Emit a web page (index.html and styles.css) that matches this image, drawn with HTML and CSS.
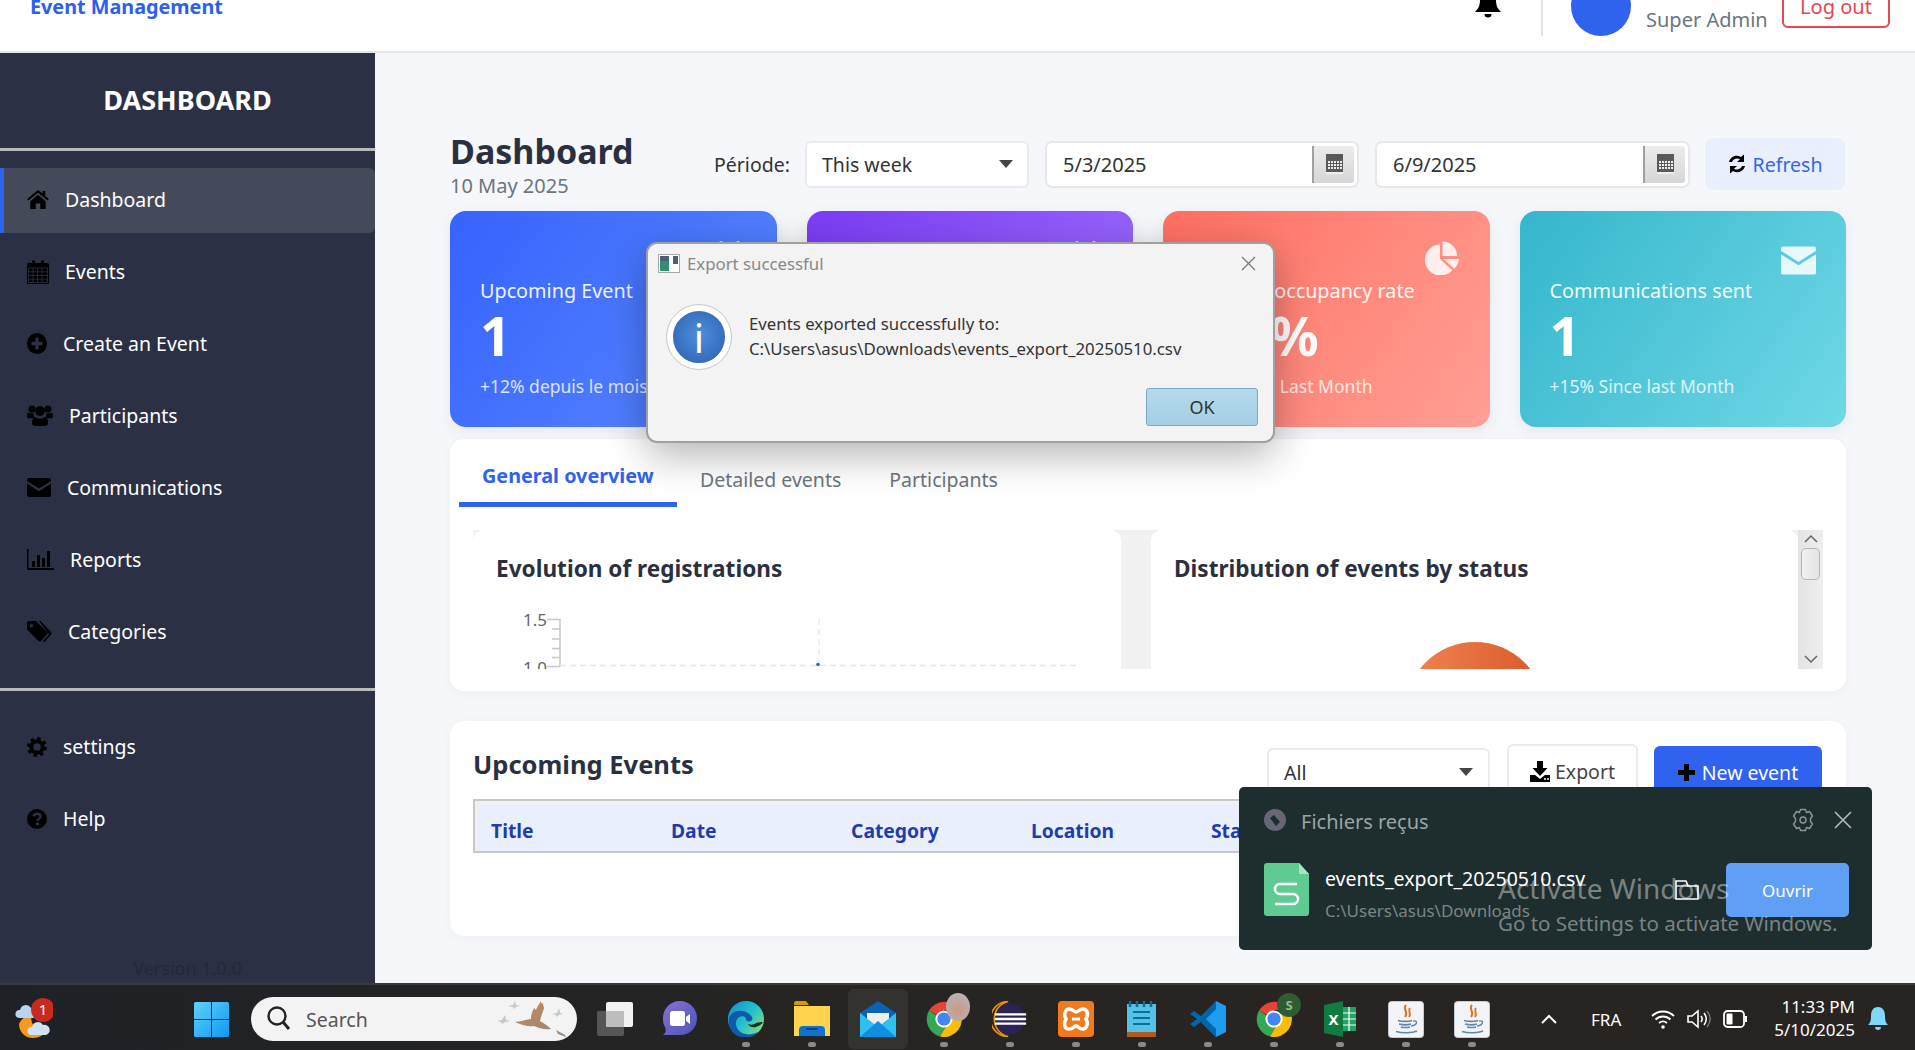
FILE: index.html
```html
<!DOCTYPE html>
<html lang="en">
<head>
<meta charset="utf-8">
<title>Event Management</title>
<link rel="stylesheet" href="styles.css">
</head>
<body>
<svg class="defs" width="0" height="0" aria-hidden="true">
  <defs>
    <symbol id="cal-btn" viewBox="0 0 17 20">
      <rect width="17" height="20" fill="#5a5a5a"/>
      <rect y="18" width="17" height="2" fill="#eee"/>
      <g fill="#eee">
        <rect x="2" y="7" width="2" height="2"/><rect x="5" y="7" width="2" height="2"/><rect x="8" y="7" width="2" height="2"/><rect x="11" y="7" width="2" height="2"/><rect x="14" y="7" width="2" height="2"/>
        <rect x="2" y="10" width="2" height="2"/><rect x="5" y="10" width="2" height="2"/><rect x="8" y="10" width="2" height="2"/><rect x="11" y="10" width="2" height="2"/><rect x="14" y="10" width="2" height="2"/>
        <rect x="2" y="13" width="2" height="2"/><rect x="5" y="13" width="2" height="2"/><rect x="8" y="13" width="2" height="2"/><rect x="11" y="13" width="2" height="2"/><rect x="14" y="13" width="2" height="2"/>
      </g>
    </symbol>
    <symbol id="chrome" viewBox="0 0 36 36">
      <path d="M18 18 L3 9.500 A18 18 0 0 1 33.500 9 L18 9z" fill="#ea4335"/>
      <path d="M3 9.500 A18 18 0 0 0 14 35.600 L22 22z" fill="#34a853"/>
      <path d="M33.500 9 A18 18 0 0 1 14 35.600 L22 22 L26 9z" fill="#fbbc05"/>
      <circle cx="18" cy="18" r="8.600" fill="#fff"/>
      <circle cx="18" cy="18" r="6.600" fill="#4285f4"/>
    </symbol>
    <symbol id="java" viewBox="0 0 36 37">
      <rect x=".5" y=".5" width="35" height="36" rx="3" fill="#f2f4f7" stroke="#c5ccd6"/>
      <path d="M18 4c-4 4 3 6-1 12M22 7c-3 3 2 5-1 9" fill="none" stroke="#e2701f" stroke-width="2"/>
      <path d="M10 19.500c4 1.200 11 1.200 14 0M11 23c4 1 9 1 12 0M13 26c3 .7 6 .7 9 0M8 30.500c6 1.700 16 1.700 21-.5" fill="none" stroke="#5f87a8" stroke-width="1.600"/>
      <path d="M25 20c5-1 5 4-2 5" fill="none" stroke="#5f87a8" stroke-width="1.400"/>
    </symbol>
  </defs>
</svg>

<header class="topbar">
  <div class="topbar-inner">
    <div class="brand">Event Management</div>
    <svg class="top-bell" viewBox="0 0 26 32"><path d="M13 0a2.500 2.500 0 0 1 2.500 3C20 4 21 8 21 13c0 6 2 9 5 12H0c3-3 5-6 5-12 0-5 1-9 5.500-10A2.500 2.500 0 0 1 13 0zM9.500 27h7a3.500 3.500 0 0 1-7 0z" fill="#000"/></svg>
    <div class="top-sep"></div>
    <div class="avatar"></div>
    <div class="user-role">Super Admin</div>
    <button class="logout">Log out</button>
  </div>
</header>

<div class="layout">
  <aside class="sidebar">
    <div class="side-title">DASHBOARD</div>
    <nav class="nav nav-main">
      <a class="nav-item active"><svg class="ni" width="22" height="19" viewBox="0 0 24 21"><path d="M12 0 0 10l1.400 1.700L12 3l10.600 8.700L24 10l-4-3.400V1h-3v3z"/><path d="M3.500 12.500 12 5.300l8.500 7.200V21h-6v-6h-5v6h-6z"/></svg>Dashboard</a>
      <a class="nav-item"><svg class="ni" width="22" height="24" viewBox="0 0 22 24"><path d="M1.500 3H5V1.500a1.500 1.500 0 0 1 3 0V3h6V1.500a1.500 1.500 0 0 1 3 0V3h3.500A1.500 1.500 0 0 1 22 4.500v18a1.500 1.500 0 0 1-1.500 1.500h-19A1.500 1.500 0 0 1 0 22.500v-18A1.500 1.500 0 0 1 1.500 3z"/><path d="M1.500 8h19v14.500h-19zM6 8v14.500M10.500 8v14.500M15 8v14.500M1.500 11.800h19M1.500 15.500h19M1.500 19.200h19" fill="none" stroke="#2b3044" stroke-width=".8"/></svg>Events</a>
      <a class="nav-item"><svg class="ni" width="20" height="21" viewBox="0 0 20 21"><ellipse cx="10" cy="10.500" rx="10" ry="10.500"/><path d="M8.300 4.500h3.400v4.300h3.800v3.400h-3.800v4.300H8.300v-4.300H4.500V8.800h3.800z" fill="#2b3044"/></svg>Create an Event</a>
      <a class="nav-item"><svg class="ni" width="26" height="21" viewBox="0 0 26 21"><circle cx="5" cy="4" r="3.500"/><circle cx="21" cy="4" r="3.500"/><circle cx="13" cy="6" r="5"/><path d="M0 9.500C0 8 1.500 7.500 3 7.800c1 .8 2.500 1 3.800.3-.3 2-.2 3.500 1.200 5.200H1.500C.5 13.300 0 11.500 0 9.500zM26 9.500c0-1.500-1.500-2-3-1.700-1 .8-2.500 1-3.800.3.300 2 .2 3.500-1.200 5.200h6.500c1 0 1.500-1.800 1.500-3.800zM8 12c3 2 7 2 10 0 2 .5 3 3 3 5.500 0 2-1 3.500-3 3.500H8c-2 0-3-1.500-3-3.500C5 15 6 12.500 8 12z"/></svg>Participants</a>
      <a class="nav-item"><svg class="ni" width="24" height="19" viewBox="0 0 24 18" preserveAspectRatio="none"><path d="M2 0h20a2 2 0 0 1 2 2v.8L12 10 0 2.800V2a2 2 0 0 1 2-2z"/><path d="M0 5.300 12 12.500l12-7.200V16a2 2 0 0 1-2 2H2a2 2 0 0 1-2-2z"/></svg>Communications</a>
      <a class="nav-item"><svg class="ni" width="27" height="21" viewBox="0 0 27 21"><path d="M0 0h1.500v19H27v2H0z"/><rect x="5" y="12" width="3" height="6"/><rect x="10" y="6" width="3" height="12"/><rect x="15" y="9" width="3" height="9"/><rect x="20" y="2" width="3" height="16"/></svg>Reports</a>
      <a class="nav-item"><svg class="ni" width="25" height="21" viewBox="0 0 25 21"><path d="M1.500 0H9l11 11a1.800 1.800 0 0 1 0 2.500L14 20a1.800 1.800 0 0 1-2.500 0L0 8.500V1.500A1.500 1.500 0 0 1 1.500 0zM4.500 3a1.700 1.700 0 1 0 0 3.400 1.700 1.700 0 0 0 0-3.400z"/><path d="M12 0h1.500L24 11a1.800 1.800 0 0 1 0 2.500L17.500 21l-1.500-1 6-6.500z"/></svg>Categories</a>
    </nav>
    <div class="side-sep"></div>
    <nav class="nav nav-foot">
      <a class="nav-item"><svg class="ni" width="20" height="20" viewBox="0 0 20 20"><circle cx="10" cy="10" r="8.200" fill="none" stroke="#000" stroke-width="3.600" stroke-dasharray="3.200 3.240"/><circle cx="10" cy="10" r="5.800" fill="none" stroke="#000" stroke-width="4"/></svg>settings</a>
      <a class="nav-item"><svg class="ni" width="20" height="20" viewBox="0 0 20 20"><circle cx="10" cy="10" r="10"/><path d="M6.500 7.500C7 3.800 13.500 4 13.500 7.500c0 2.500-3 2.400-3 4.500" fill="none" stroke="#2b3044" stroke-width="2.400"/><rect x="9" y="13.500" width="3" height="2.800" fill="#2b3044"/></svg>Help</a>
    </nav>
    <div class="version">Version 1.0.0</div>
  </aside>

  <main class="main">
    <section class="page-head">
      <div class="page-title">
        <h1>Dashboard</h1>
        <div class="page-date">10 May 2025</div>
      </div>
      <div class="filters">
        <span class="filter-label">Période:</span>
        <div class="select period"><span>This week</span><i class="caret"></i></div>
        <div class="datebox"><span class="date-val">5/3/2025</span><span class="date-btn"><svg width="17" height="20"><use href="#cal-btn"/></svg></span></div>
        <div class="datebox"><span class="date-val">6/9/2025</span><span class="date-btn"><svg width="17" height="20"><use href="#cal-btn"/></svg></span></div>
        <button class="refresh"><svg width="18" height="20" viewBox="0 0 18 20"><path d="M1 8C2 3 8 0 13 3l3-2.500V8H9l3-2.700C9 3.300 5 5 4 8zM17 12c-1 5-7 8-12 5l-3 2.500V12h7l-3 2.700c3 2 7 .3 8-2.700z" fill="#000"/></svg>Refresh</button>
      </div>
    </section>

    <section class="stats">
      <article class="stat stat-blue">
        <svg class="stat-icon" viewBox="0 0 34 36"><path d="M3 4h3V2a2 2 0 0 1 4 0v2h14V2a2 2 0 0 1 4 0v2h3a3 3 0 0 1 3 3v26a3 3 0 0 1-3 3H3a3 3 0 0 1-3-3V7a3 3 0 0 1 3-3z" fill="#fff" fill-opacity=".85"/></svg>
        <div class="stat-label">Upcoming Event</div>
        <div class="stat-value">1</div>
        <div class="stat-sub">+12% depuis le mois dernier</div>
      </article>
      <article class="stat stat-purple">
        <svg class="stat-icon" viewBox="0 0 34 36"><path d="M3 4h3V2a2 2 0 0 1 4 0v2h14V2a2 2 0 0 1 4 0v2h3a3 3 0 0 1 3 3v26a3 3 0 0 1-3 3H3a3 3 0 0 1-3-3V7a3 3 0 0 1 3-3z" fill="#fff" fill-opacity=".85"/></svg>
        <div class="stat-label">Registered Participants</div>
        <div class="stat-value">1</div>
        <div class="stat-sub">+8% Since last Month</div>
      </article>
      <article class="stat stat-red">
        <svg class="stat-icon" viewBox="0 0 36 34"><path d="M15.500 3A16 16 0 1 0 28 29.500L15.500 18z" fill="#fff" fill-opacity=".85"/><path d="M18 0a15 15 0 0 1 15 15H18z" fill="#fff" fill-opacity=".85"/><path d="M19 18h16a17 17 0 0 1-5 10z" fill="#fff" fill-opacity=".85"/></svg>
        <div class="stat-label">Average occupancy rate</div>
        <div class="stat-value">0.0%</div>
        <div class="stat-sub">+5% Since Last Month</div>
      </article>
      <article class="stat stat-teal">
        <svg class="stat-icon stat-mail" viewBox="0 0 36 29"><path d="M2 0h32a2 2 0 0 1 2 2v2.500L18 16 0 4.500V2a2 2 0 0 1 2-2z" fill="#fff" fill-opacity=".85"/><path d="M0 8l18 11.500L36 8v19a2 2 0 0 1-2 2H2a2 2 0 0 1-2-2z" fill="#fff" fill-opacity=".85"/></svg>
        <div class="stat-label">Communications sent</div>
        <div class="stat-value">1</div>
        <div class="stat-sub">+15% Since last Month</div>
      </article>
    </section>

    <section class="panel tabs-panel">
      <div class="tabs">
        <div class="tab tab-active">General overview</div>
        <div class="tab">Detailed events</div>
        <div class="tab tab-last">Participants</div>
      </div>
      <div class="scroller">
        <div class="scroll-content">
          <div class="chart-card chart-left">
            <h3>Evolution of registrations</h3>
            <svg class="line-chart" width="648" height="60" viewBox="0 0 648 60">
              <g class="axis-lab"><text x="50" y="17">1.5</text><text x="50" y="65">1.0</text></g>
              <path d="M87 10.500h-13M87 20h-8M87 30h-8M87 39.500h-8M87 48.500h-8M87 57.500h-13M87 10v48" fill="none" stroke="#c8c8c8" stroke-width="1.500"/>
              <path d="M87 56.500H605M346 10v46" fill="none" stroke="#e6e8ef" stroke-width="1.500" stroke-dasharray="6 4"/>
              <circle cx="345" cy="55.500" r="1.800" fill="#2f62ee"/>
            </svg>
          </div>
          <div class="chart-card chart-right">
            <h3>Distribution of events by status</h3>
            <div class="pie-top"></div>
          </div>
        </div>
        <div class="scrollbar">
          <svg class="sb-arrow" width="16" height="10" viewBox="0 0 16 10"><path d="M2 8l6-6 6 6" fill="none" stroke="#666" stroke-width="1.500"/></svg>
          <div class="sb-thumb"></div>
          <svg class="sb-arrow sb-down" width="16" height="10" viewBox="0 0 16 10"><path d="M2 2l6 6 6-6" fill="none" stroke="#666" stroke-width="1.500"/></svg>
        </div>
      </div>
    </section>

    <section class="panel events-panel">
      <div class="events-head">
        <h2>Upcoming Events</h2>
        <div class="events-tools">
          <div class="select all"><span>All</span><i class="caret"></i></div>
          <button class="btn-export"><svg width="20" height="21" viewBox="0 0 20 21"><path d="M7 0h6v7h4.500L10 15 2.500 7H7z" fill="#000"/><path d="M0 14h5l5 4 5-4h5v7H0z" fill="#000"/><circle cx="15" cy="18" r="1" fill="#fff"/><circle cx="18" cy="18" r="1" fill="#fff"/></svg>Export</button>
          <button class="btn-new"><svg width="17" height="17" viewBox="0 0 17 17"><path d="M6 0h5v6h6v5h-6v6H6v-6H0V6h6z" fill="#000"/></svg>New event</button>
        </div>
      </div>
      <div class="table-wrap">
        <table class="ev-table">
          <thead><tr><th>Title</th><th>Date</th><th>Category</th><th>Location</th><th>Status</th><th>Participants</th><th>Actions</th></tr></thead>
        </table>
      </div>
    </section>
  </main>
</div>

<footer class="taskbar">
  <svg class="tb-weather" width="38" height="42" viewBox="0 0 38 42">
    <path d="M4 26c0 8 6 14 14 14 6 0 11-3 14-8-9 2-16-3-16-14-6 0-10 3-12 8z" fill="#f39a1f"/>
    <path d="M4 20a4 4 0 0 1 1-8 6 6 0 0 1 11-2 5 5 0 0 1 2 10z" fill="#b8d4f2"/>
    <path d="M16 37a4 4 0 0 1 1-8 6 6 0 0 1 11-2 5 5 0 0 1 3 10z" fill="#cfe2f7"/>
    <circle cx="28" cy="12" r="12" fill="#c92a1e"/>
    <text x="28" y="17" class="badge-num">1</text>
  </svg>
  <svg class="tb-start" width="35" height="35" viewBox="0 0 35 35">
    <defs><linearGradient id="st" x1="0" y1="0" x2="1" y2="1"><stop offset="0" stop-color="#5fd3fb"/><stop offset="1" stop-color="#0f96f5"/></linearGradient></defs>
    <path d="M1.500 0H17v17H0V1.500A1.500 1.500 0 0 1 1.500 0zM18 0h15.500A1.500 1.500 0 0 1 35 1.500V17H18zM0 18h17v17H1.500A1.500 1.500 0 0 1 0 33.500zM18 18h17v15.500a1.500 1.500 0 0 1-1.500 1.500H18z" fill="url(#st)"/>
  </svg>
  <div class="tb-search">
    <svg width="24" height="26" viewBox="0 0 24 26"><circle cx="10" cy="10" r="8.500" fill="none" stroke="#222" stroke-width="2.400"/><path d="M16 16l6 7" stroke="#222" stroke-width="3"/></svg>
    <span>Search</span>
    <svg class="tb-bird" width="74" height="42" viewBox="0 0 74 42">
      <defs><linearGradient id="bd" x1="0" y1="0" x2="1" y2="1"><stop offset="0" stop-color="#c88a52"/><stop offset="1" stop-color="#9d8a78"/></linearGradient></defs>
      <path d="M19 24l7-1c3-1 6-2 9-2 0-6 2-8 3-11l2 2c1-3 3-6 5-9 0 3 1 3 2 2 0 3 1 3 1 5-1 4-3 8-4 13 4 2 8 5 11 8-7 1-12-1-17-3-6 1-12-1-19-4z" fill="url(#bd)"/>
      <path d="M60 32l9 5 1 2-8-3z" fill="#9d8a78"/>
      <g fill="#c9c4cd"><path d="M1 23l5-1 3-5 1 5 4 1-5 1-3 2-1-2zM12 8l5-1 2-4 1 4 4 1-4 1-2 2-1-2zM56 16l5-1 2-5 1 5 3 1-4 1-2 2-1-2z"/></g>
    </svg>
  </div>
  <svg class="tb-view" width="36" height="34" viewBox="0 0 36 34"><rect y="9" width="27" height="25" rx="2" fill="#565656"/><rect x="9" width="27" height="25" rx="2" fill="#f2f2f2"/><path d="M9 9h18v16H11a2 2 0 0 1-2-2z" fill="#bdbdbd"/></svg>
  <div class="tb-apps">
    <div class="slot"><svg width="36" height="36" viewBox="0 0 36 36"><defs><linearGradient id="meet" x1="0" y1="0" x2="1" y2="1"><stop offset="0" stop-color="#8a6fd6"/><stop offset="1" stop-color="#4a56b8"/></linearGradient></defs><path d="M18 0c10 0 17 8 17 17 0 10-7 17-17 17H1c3-2 3-5 2-8C1 23 1 20 1 17 1 8 8 0 18 0z" fill="url(#meet)"/><rect x="8" y="10" width="15" height="15" rx="2.500" fill="#fff"/><path d="M24 16l4-3v10l-4-3z" fill="#fff"/></svg></div>
    <div class="slot slot-open"><svg width="36" height="36" viewBox="0 0 36 36"><defs><linearGradient id="edge" x1="0" y1="0" x2="1" y2=".8"><stop offset="0" stop-color="#0d8fd0"/><stop offset=".55" stop-color="#22c0cf"/><stop offset="1" stop-color="#7fe07a"/></linearGradient></defs><circle cx="18" cy="18" r="18" fill="url(#edge)"/><path d="M1 17C4 9 13 8 20 12c4 2.500 6 6 3 8-3 1-5 0-5-2 0-3-5-4-8-1-4 4-2 12 4 15 5 2 10 2 16-1-5 6-13 7-20 4C3 32 0 25 1 17z" fill="#0f5aa6"/><path d="M28 22c-2 2-5 2-8 1 1 2 4 4 8 3 3-1 6-3 7-5-2 0-4 0-7 1z" fill="#111" fill-opacity=".85"/></svg></div>
    <div class="slot slot-open"><svg width="36" height="36" viewBox="0 0 36 36"><path d="M0 2a2 2 0 0 1 2-2h10l3 4h-15z" fill="#d69a00"/><path d="M0 5h36v30H0z" fill="#ffd34e"/><path d="M5 35V29a4 4 0 0 1 4-4h18a4 4 0 0 1 4 4v6z" fill="#0a74d0"/><rect x="12" y="27" width="12" height="2" fill="#043e78"/></svg></div>
    <div class="slot slot-active"><svg width="36" height="36" viewBox="0 0 36 36"><path d="M18 0 36 12v4H0v-4z" fill="#0a62b5"/><path d="M7 12h22v13H7z" fill="#eee"/><path d="M0 12l18 14 18-14v24H0z" fill="#2fc0f2"/><path d="M0 36 18 20l18 16z" fill="#0f8fe0"/></svg></div>
    <div class="slot slot-open"><span class="chrome-wrap"><svg width="36" height="36"><use href="#chrome"/></svg><i class="chrome-badge"></i></span></div>
    <div class="slot slot-open"><svg width="36" height="36" viewBox="0 0 38 38"><circle cx="19" cy="19" r="16" fill="#2c2255"/><path d="M17 .5A18.500 18.500 0 0 0 17 37.500 19 19 0 0 1 17 .5z" fill="none" stroke="#e8930c" stroke-width="1.600"/><path d="M3 14h33M3 19h33M3 24h33" stroke="#fff" stroke-width="2.400"/></svg></div>
    <div class="slot slot-open"><svg width="36" height="36" viewBox="0 0 36 36"><rect width="36" height="36" rx="4" fill="#f07a1c"/><path d="M11 8c4 0 5 3 7 3s3-3 7-3 6 5 3 10c3 5 0 10-3 10-4 0-5-3-7-3s-3 3-7 3-6-5-3-10c-3-5 0-10 3-10z" fill="none" stroke="#fff" stroke-width="3.500"/><path d="M14 18h8" stroke="#fff" stroke-width="3"/></svg></div>
    <div class="slot slot-open"><svg width="30" height="36" viewBox="0 0 30 36"><rect y="3" width="29" height="29" fill="#55c1e8"/><rect y="31" width="29" height="5" fill="#b05a1e"/><path d="M3 0v6M10 0v6M17 0v6M24 0v6" stroke="#0d6f93" stroke-width="2.500"/><path d="M6 11h17M6 17h17M6 23h17" stroke="#0d6f93" stroke-width="2.200"/></svg></div>
    <div class="slot slot-open"><svg width="36" height="36" viewBox="0 0 36 36"><path d="M26 0 36 5v26l-10 5-14-14z" fill="#1f9cf0"/><path d="M26 0 11 15 4 10 0 13l7 5-7 5 4 3 7-5 15 15v-8L16 18 26 8z" fill="#0065a9"/></svg></div>
    <div class="slot slot-open"><span class="chrome-wrap"><svg width="36" height="36"><use href="#chrome"/></svg><svg class="s-badge" width="24" height="24" viewBox="0 0 24 24"><circle cx="12" cy="12" r="12" fill="#2f5d2e"/><text x="12" y="17" class="s-num">S</text></svg></span></div>
    <div class="slot slot-open"><svg width="32" height="36" viewBox="0 0 32 36"><path d="M0 4 19 0v36L0 32z" fill="#107c41"/><rect x="19" y="6" width="13" height="24" fill="#21a366"/><path d="M19 12h13M19 18h13M19 24h13M25 6v24" stroke="#fff" stroke-width="1.200"/><text x="9.500" y="24" class="x-num">X</text></svg></div>
    <div class="slot slot-open"><svg width="36" height="37"><use href="#java"/></svg></div>
    <div class="slot slot-open"><svg width="36" height="37"><use href="#java"/></svg></div>
  </div>
  <div class="tb-tray">
    <svg class="tr-chev" width="18" height="10" viewBox="0 0 18 10"><path d="M2 9l7-7 7 7" fill="none" stroke="#fff" stroke-width="2"/></svg>
    <span class="tr-lang">FRA</span>
    <svg class="tr-wifi" width="24" height="20" viewBox="0 0 24 20"><path d="M1 7c6-6 16-6 22 0M4.500 10.500c4-4 11-4 15 0M8 14c2.500-2 5.500-2 8 0" fill="none" stroke="#fff" stroke-width="1.800"/><circle cx="12" cy="18" r="1.800" fill="#fff"/></svg>
    <svg class="tr-vol" width="24" height="20" viewBox="0 0 24 20"><path d="M1 7h4l6-5v16l-6-5H1z" fill="none" stroke="#fff" stroke-width="1.600"/><path d="M14 7c1.500 2 1.500 4 0 6M17 4c3 4 3 8 0 12" fill="none" stroke="#fff" stroke-width="1.600"/><path d="M20 2c4 5 4 11 0 16" fill="none" stroke="#777" stroke-width="1.400"/></svg>
    <svg class="tr-bat" width="24" height="18" viewBox="0 0 24 18"><rect x="1" y="1" width="20" height="16" rx="3.500" fill="none" stroke="#fff" stroke-width="1.800"/><rect x="3.500" y="3.500" width="6" height="11" rx="1" fill="#fff"/><rect x="22" y="6" width="2" height="6" fill="#fff"/></svg>
    <div class="tr-clock"><div>11:33 PM</div><div>5/10/2025</div></div>
    <svg class="tr-bell" width="20" height="24" viewBox="0 0 20 24"><path d="M10 0c5 0 7 4 7 9 0 5 1 7 3 9H0c2-2 3-4 3-9 0-5 2-9 7-9z" fill="#7fd8f8"/><path d="M7 20h6a3 3 0 0 1-6 0z" fill="#7fd8f8"/></svg>
  </div>
</footer>

<div class="modal">
  <div class="modal-title">
    <svg width="22" height="19" viewBox="0 0 22 19"><rect x=".5" y=".5" width="21" height="18" fill="#fff" stroke="#aaa"/><rect x="2" y="2" width="9" height="15" fill="#2f8f6f"/><rect x="2" y="2" width="9" height="5" fill="#4a5f7a"/><rect x="15" y="2" width="5" height="8" fill="#4a5f7a"/></svg>
    <span>Export successful</span>
    <svg class="modal-x" width="15" height="15" viewBox="0 0 15 15"><path d="M1 1l13 13M14 1 1 14" stroke="#777" stroke-width="1.200"/></svg>
  </div>
  <div class="modal-body">
    <div class="info-ico"><span>i</span></div>
    <div class="modal-text">
      <div>Events exported successfully to:</div>
      <div>C:\Users\asus\Downloads\events_export_20250510.csv</div>
    </div>
  </div>
  <div class="modal-foot"><button class="ok">OK</button></div>
</div>

<aside class="toast">
  <div class="toast-head">
    <svg width="22" height="22" viewBox="0 0 22 22"><circle cx="11" cy="11" r="11" fill="#667"/><path d="M6 9l6 8 4-4-6-7z" fill="#1e2d2e"/></svg>
    <span class="toast-title">Fichiers reçus</span>
    <svg class="toast-gear" width="22" height="24" viewBox="0 0 22 24"><path d="M8.500 1.500h5l1 3 3-1 3 4.500-2 2.500v3l2 2.500-3 4.500-3-1-1 3h-5l-1-3-3 1-3-4.500 2-2.500v-3L1.500 8l3-4.500 3 1z" fill="none" stroke="#8d9797" stroke-width="1.400" stroke-linejoin="round"/><circle cx="11" cy="12" r="3" fill="none" stroke="#8d9797" stroke-width="1.400"/></svg>
    <svg class="toast-x" width="18" height="18" viewBox="0 0 18 18"><path d="M1 1l16 16M17 1 1 17" stroke="#b5bcbc" stroke-width="1.600"/></svg>
  </div>
  <div class="toast-body">
    <svg class="file-ico" width="45" height="53" viewBox="0 0 45 53"><path d="M3 0h32l10 11v39a3 3 0 0 1-3 3H3a3 3 0 0 1-3-3V3a3 3 0 0 1 3-3z" fill="#5fcb93"/><path d="M35 0l10 11H35z" fill="#a5e3c3"/><path d="M33 21H16a5 5 0 0 0 0 10h13a5 5 0 0 1 0 10H11" fill="none" stroke="#fff" stroke-width="2.500"/></svg>
    <div class="file-info">
      <div class="file-name">events_export_20250510.csv</div>
      <div class="file-path">C:\Users\asus\Downloads</div>
    </div>
    <svg class="folder-ico" width="24" height="20" viewBox="0 0 24 20"><path d="M1 19V1h10l2 5h10v13z" fill="none" stroke="#fff" stroke-width="1.600"/><path d="M1 6h12" stroke="#fff" stroke-width="1.200"/></svg>
    <button class="ouvrir">Ouvrir</button>
  </div>
</aside>

<div class="watermark">
  <div class="wm-1">Activate Windows</div>
  <div class="wm-2">Go to Settings to activate Windows.</div>
</div>
</body>
</html>
```

FILE: styles.css
```css
* { box-sizing: border-box; }
html, body { margin: 0; padding: 0; }
body {
  position: relative;
  width: 1915px;
  height: 1050px;
  overflow: hidden;
  display: flex;
  flex-direction: column;
  font-family: "Noto Sans", "Open Sans", sans-serif;
  color: #2b3040;
  background: #f5f7fb;
}
.defs { position: absolute; }
h1, h2, h3 { margin: 0; }
button { font-family: inherit; cursor: default; }

/* top bar */
.topbar {
  flex: none;
  height: 53px;
  background: #fff;
  border-bottom: 2px solid #e4e8ee;
  overflow: hidden;
}
.topbar-inner {
  height: 82px;
  margin-top: -30px;
  padding: 0 25px 0 30px;
  display: flex;
  align-items: center;
}
.brand {
  margin-right: auto;
  margin-bottom: 9px;
  color: #2c5fed;
  font-weight: 700;
  font-size: 19.8px;
}
.top-bell { width: 26px; height: 32px; margin: 0 40px 17px 0; }
.top-sep { width: 2px; height: 60px; background: #dfe1e5; margin: 0 28px 10px 0; }
.avatar { width: 60px; height: 60px; border-radius: 50%; background: #2f62ee; margin: 0 15px 10px 0; }
.user-role { width: 120px; margin: 16px 16px 0 0; color: #6c757d; font-size: 20px; white-space: nowrap; }
.logout {
  width: 108px;
  height: 42px;
  margin-bottom: 8px;
  padding: 0 0 2px;
  background: #fff;
  border: 2px solid #e84555;
  border-radius: 6px;
  color: #e84555;
  font-size: 20px;
}

/* layout */
.layout { flex: 1; min-height: 0; display: flex; }
.sidebar {
  flex: none;
  width: 375px;
  display: flex;
  flex-direction: column;
  background: #2b3044;
  color: #fff;
}
.side-title {
  height: 98px;
  padding-bottom: 2px;
  border-bottom: 3px solid #b9b9b9;
  display: flex;
  align-items: center;
  justify-content: center;
  font-weight: 700;
  font-size: 27px;
}
.nav { display: flex; flex-direction: column; gap: 7px; }
.nav-main { padding-top: 17px; padding-bottom: 23px; }
.nav-foot { padding-top: 23px; }
.nav-item {
  height: 65px;
  padding-left: 27px;
  display: flex;
  align-items: center;
  gap: 16px;
  font-size: 19.5px;
  border-radius: 6px;
}
.nav-main .nav-item { padding-bottom: 2px; }
.nav-item.active {
  background: #454a5b;
  box-shadow: inset 4px 0 0 #2f62ee;
  border-radius: 0 6px 6px 0;
}
.ni { flex: none; fill: #000; }
.side-sep { height: 3px; background: #b9b9b9; }
.version {
  margin-top: auto;
  padding-bottom: 3px;
  text-align: center;
  color: #242938;
  font-size: 18px;
}

/* main */
.main {
  flex: 1;
  min-width: 0;
  padding: 77px 69px 0 75px;
  background: #f5f7fb;
}
.page-head { height: 81px; display: flex; justify-content: space-between; align-items: flex-start; }
.page-title h1 { font-size: 34px; line-height: 42px; font-weight: 700; color: #2b3040; }
.page-date { font-size: 20px; line-height: 28px; color: #6c757d; }
.filters { display: flex; align-items: center; margin: 8px 1px 0 0; height: 52px; }
.filter-label { width: 91px; font-size: 19.5px; color: #333; }
.select {
  display: flex;
  align-items: center;
  justify-content: space-between;
  background: #fff;
  border: 2px solid #e9ecef;
  border-radius: 6px;
  color: #333;
  font-size: 19.5px;
}
.period { width: 224px; height: 47px; padding: 0 14px 0 15px; margin-right: 16px; }
.caret { width: 0; height: 0; border-left: 7px solid transparent; border-right: 7px solid transparent; border-top: 8px solid #444; }
.datebox {
  width: 314px;
  height: 47px;
  margin-right: 16px;
  padding: 3px;
  display: flex;
  background: #fff;
  border: 2px solid #e6e8ea;
  border-radius: 7px;
}
.datebox + .datebox { width: 315px; margin-right: 15px; }
.date-val { flex: 1; padding-left: 13px; font-size: 20px; line-height: 38px; color: #333; }
.date-btn {
  flex: none;
  width: 42px;
  display: flex;
  align-items: center;
  justify-content: center;
  background: linear-gradient(#ececec, #d6d6d6);
  border-left: 2px solid #a0a0a0;
  border-radius: 0 3px 3px 0;
}
.refresh {
  width: 140px;
  height: 52px;
  display: flex;
  align-items: center;
  justify-content: center;
  gap: 7px;
  border: 0;
  border-radius: 8px;
  background: #e9effd;
  color: #3366f0;
  font-size: 19.5px;
}

/* stats */
.stats { display: grid; grid-template-columns: repeat(4, 1fr); gap: 30px; }
.stat {
  position: relative;
  height: 216px;
  padding: 66px 20px 0 30px;
  border-radius: 16px;
  color: #fff;
  box-shadow: 0 4px 14px rgba(40, 50, 80, .08);
  white-space: nowrap;
  overflow: hidden;
}
.stat-blue { background: linear-gradient(125deg, #3563fd, #5b88ff); }
.stat-purple { background: linear-gradient(125deg, #7a3cf5, #a070ff); }
.stat-red { background: linear-gradient(125deg, #ff6f61, #ff9f95); }
.stat-teal { background: linear-gradient(125deg, #35b6cc, #6fd8e6); }
.stat-icon { position: absolute; top: 30px; right: 30px; width: 35px; height: 34px; }
.stat-mail { top: 35px; height: 29px; }
.stat-label { font-size: 19.8px; line-height: 28px; opacity: .92; }
.stat-value { font-size: 54px; line-height: 60px; font-weight: 700; }
.stat-sub { margin-top: 8px; font-size: 17.5px; line-height: 26px; opacity: .8; }

/* panels */
.panel { background: #fff; border-radius: 14px; box-shadow: 0 2px 10px rgba(40, 50, 80, .04); }
.tabs-panel { margin-top: 12px; height: 252px; padding-left: 9px; }
.tabs { display: flex; height: 68px; }
.tab {
  padding: 27px 23px 0;
  color: #6c757d;
  font-size: 19.5px;
  line-height: 28px;
}
.tab-last { padding-left: 25px; }
.tab-active {
  width: 218px;
  padding-top: 23px;
  border-bottom: 5px solid #2f62ee;
  color: #2f62ee;
  font-size: 19.8px;
  font-weight: 700;
  white-space: nowrap;
}
.scroller { margin: 23px 23px 0 14px; height: 139px; display: flex; overflow: hidden; }
.scroll-content { flex: 1; min-width: 0; display: flex; gap: 30px; background: #f1f1f1; overflow: hidden; }
.chart-card { background: #fff; border-radius: 10px 10px 0 0; padding: 22px 24px 0; height: 300px; overflow: hidden; }
.chart-left { flex: none; width: 648px; padding-right: 0; padding-left: 0; }
.chart-left h3 { padding-left: 23px; }
.chart-right { flex: 1; padding-left: 23px; position: relative; }
.chart-card h3 { font-size: 22.6px; line-height: 34px; font-weight: 700; color: #2b3040; }
.line-chart { display: block; margin-top: 23px; }
.axis-lab text { font-size: 17px; fill: #666; font-family: "Noto Sans", sans-serif; }
.pie-top {
  width: 140px;
  height: 140px;
  margin: 56px 0 0 231px;
  border-radius: 50%;
  background: linear-gradient(90deg, #f28552, #d9582a);
}
.scrollbar {
  flex: none;
  width: 25px;
  height: 139px;
  display: flex;
  flex-direction: column;
  align-items: center;
  padding-top: 4px;
  background: linear-gradient(90deg, #e4e4e4, #eeeeee);
}
.sb-thumb {
  width: 19px;
  height: 32px;
  margin-top: 4px;
  border: 1.5px solid #b5b5b5;
  border-radius: 5px;
  background: linear-gradient(90deg, #f2f2f2, #e3e3e3);
}
.sb-down { margin-top: auto; margin-bottom: 5px; }

/* events */
.events-panel { margin-top: 30px; height: 215px; padding: 23px 24px 0 23px; }
.events-head { display: flex; justify-content: space-between; height: 55px; }
.events-head h2 { font-size: 25.5px; line-height: 40px; font-weight: 700; color: #2b3040; }
.events-tools { display: flex; align-items: flex-start; }
.all { width: 223px; height: 48px; margin: 4px 17px 0 0; padding: 0 15px; }
.btn-export {
  width: 131px;
  height: 54px;
  margin-right: 16px;
  display: flex;
  align-items: center;
  justify-content: center;
  gap: 5px;
  background: #fff;
  border: 2px solid #e9ecef;
  border-radius: 6px;
  color: #444;
  font-size: 19.5px;
}
.btn-new {
  width: 168px;
  height: 52px;
  margin-top: 2px;
  display: flex;
  align-items: center;
  justify-content: center;
  gap: 7px;
  background: #2f62ee;
  border: 0;
  border-radius: 6px;
  color: #fff;
  font-size: 19.5px;
}
.table-wrap {
  height: 54px;
  padding: 3px 0 0 3px;
  background: #f1f1f1;
  border: 2px solid #c8c8c8;
}
.ev-table {
  width: 100%;
  height: 47px;
  table-layout: fixed;
  border-collapse: separate;
  border-spacing: 0;
  background: #e9effd;
  border-radius: 8px 0 0 0;
}
.ev-table th {
  width: 180px;
  padding: 5px 0 0 13px;
  text-align: left;
  font-size: 19.3px;
  font-weight: 700;
  color: #1e3caf;
}
.ev-table th:last-child { width: auto; }

/* taskbar */
.taskbar {
  flex: none;
  height: 67px;
  padding: 3px 0 0 15px;
  display: flex;
  align-items: center;
  background: linear-gradient(90deg, #1e2126, #272523 50%, #272421);
  border-top: 2px solid #3a3a3a;
  color: #fff;
}
.tb-weather { flex: none; margin-right: 141px; }
.badge-num { font: 15px "Noto Sans", sans-serif; fill: #fff; text-anchor: middle; }
.tb-start { flex: none; margin-right: 22px; }
.tb-search {
  flex: none;
  width: 326px;
  height: 44px;
  margin-right: 20px;
  padding: 0 7px 0 16px;
  display: flex;
  align-items: center;
  gap: 15px;
  border-radius: 22px;
  background: #f3f3f3;
  color: #555;
  font-size: 19.5px;
}
.tb-bird { margin-left: auto; }
.tb-view { flex: none; margin-right: 14px; }
.tb-apps { flex: none; display: flex; }
.slot {
  position: relative;
  width: 66px;
  height: 60px;
  display: flex;
  align-items: flex-start;
  justify-content: center;
  padding-top: 12px;
}
.slot-active::before {
  content: "";
  position: absolute;
  left: 3px;
  top: 0;
  width: 60px;
  height: 60px;
  border-radius: 6px;
  background: #34322f;
}
.slot > * { position: relative; }
.slot-open::after {
  content: "";
  position: absolute;
  left: 29px;
  bottom: 2px;
  width: 8px;
  height: 5px;
  border-radius: 3px;
  background: #8a8a8a;
}
.slot svg { display: block; }
.chrome-wrap { position: relative; display: block; width: 36px; height: 36px; }
.chrome-badge {
  position: absolute;
  top: -8px;
  right: -8px;
  width: 24px;
  height: 28px;
  border-radius: 50%;
  background: radial-gradient(circle at 50% 60%, #c99a84, #b6b8c4);
}
.chrome-wrap .s-badge { position: absolute; top: -8px; right: -9px; }
.s-num { font: 700 13px "Noto Sans", sans-serif; fill: #9bb89a; text-anchor: middle; }
.x-num { font: 700 15px "Noto Sans", sans-serif; fill: #fff; text-anchor: middle; }
.tb-tray { flex: 1; display: flex; align-items: center; }
.tr-chev { margin-left: 35px; margin-right: 33px; }
.tr-lang { width: 60px; font-size: 17px; }
.tr-wifi { margin-right: 12px; }
.tr-vol { margin-right: 12px; }
.tr-clock { width: 108px; text-align: right; font-size: 17px; line-height: 23px; margin-top: -2px; }
.tr-bell { margin-left: 13px; }

/* modal */
.modal {
  position: absolute;
  left: 646px;
  top: 242px;
  width: 629px;
  height: 201px;
  background: #f3f3f3;
  border: 2px solid #a0a0a0;
  border-radius: 11px;
  box-shadow: 0 12px 40px rgba(0, 0, 0, .3);
}
.modal-title {
  height: 38px;
  padding: 0 17px 0 10px;
  display: flex;
  align-items: center;
  gap: 7px;
  color: #888;
  font-size: 16.8px;
}
.modal-x { margin-left: auto; }
.modal-body { height: 106px; padding: 23px 0 0 19px; display: flex; gap: 18px; }
.info-ico {
  flex: none;
  width: 64px;
  height: 64px;
  display: flex;
  align-items: center;
  justify-content: center;
  border: 6px solid #fff;
  outline: 1px solid #c8c8c8;
  border-radius: 50%;
  background: radial-gradient(circle at 50% 45%, #4d8edb, #2c5eae);
  color: #fff;
  font-size: 40px;
}
.modal-text { padding-top: 6px; color: #333; font-size: 16.8px; line-height: 25px; white-space: nowrap; }
.modal-foot { display: flex; justify-content: flex-end; padding-right: 15px; }
.ok {
  width: 112px;
  height: 38px;
  border: 1.5px solid #7aa9c4;
  border-radius: 3px;
  background: linear-gradient(#b4daec, #a4cfe3);
  color: #333;
  font-size: 18px;
}

/* toast */
.toast {
  position: absolute;
  left: 1239px;
  top: 787px;
  width: 633px;
  height: 163px;
  padding: 22px 20px 0 25px;
  background: #1e2d2e;
  border-radius: 5px;
}
.toast-head { display: flex; align-items: center; height: 22px; color: #9aa5a5; font-size: 20px; }
.toast-title { margin-left: 15px; margin-top: 3px; }
.toast-gear { margin-left: auto; margin-right: 20px; }
.toast-body { display: flex; align-items: flex-start; margin-top: 32px; }
.file-ico { flex: none; }
.file-info { width: 350px; margin-left: 16px; white-space: nowrap; }
.file-name { color: #fff; font-size: 19.5px; line-height: 30px; margin-top: 1px; }
.file-path { color: #7a8685; font-size: 17px; line-height: 26px; margin-top: 4px; }
.folder-ico { flex: none; margin: 17px 27px 0 0; }
.ouvrir {
  width: 123px;
  height: 54px;
  border: 0;
  border-radius: 5px;
  background: #5f9ff5;
  color: #fff;
  font-size: 17px;
}

/* watermark */
.watermark {
  position: absolute;
  left: 1498px;
  top: 868px;
  color: rgba(255, 255, 255, .42);
  white-space: nowrap;
  pointer-events: none;
}
.wm-1 { font-size: 28px; line-height: 40px; }
.wm-2 { font-size: 20.5px; line-height: 30px; }
```
